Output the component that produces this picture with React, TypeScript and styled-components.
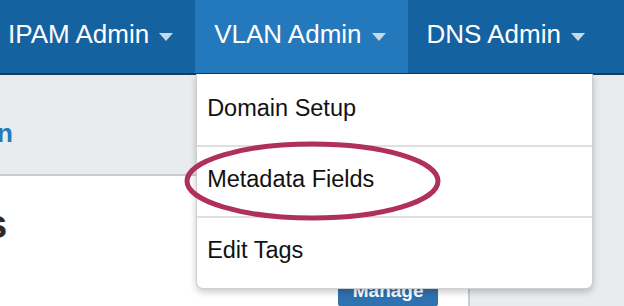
import React from 'react';
import styled, { createGlobalStyle } from 'styled-components';

const GlobalStyle = createGlobalStyle`
  html, body {
    margin: 0;
    padding: 0;
    background: #e8ecef;
    font-family: "Liberation Sans", Arial, Helvetica, sans-serif;
    overflow: hidden;
  }
  * {
    box-sizing: border-box;
  }
`;

const NavBar = styled.nav`
  height: 75px;
  background-color: #1562a0;
  border-bottom: 2px solid #0f3d68;
  position: relative;
  z-index: 5;
`;

const NavList = styled.ul`
  display: flex;
  margin: 0 0 0 -11px;
  padding: 0;
  list-style: none;
  height: 73px;
`;

const NavItem = styled.li<{ $active?: boolean }>`
  position: relative;
  display: flex;
  align-items: center;
  gap: 10px;
  height: 73px;
  padding: 0 22px 4px 19px;
  background-color: ${({ $active }) => ($active ? '#2479bd' : 'transparent')};
  color: #ffffff;
  font-size: 26px;
  white-space: nowrap;
  cursor: pointer;
`;

const Caret = styled.span`
  display: inline-block;
  width: 0;
  height: 0;
  margin-top: 5px;
  border-left: 7.5px solid transparent;
  border-right: 7.5px solid transparent;
  border-top: 8px solid #c9d7e6;
`;

const Dropdown = styled.ul`
  position: absolute;
  top: 74px;
  left: 1px;
  width: 397px;
  margin: 0;
  padding: 2px 0 1px;
  list-style: none;
  background-color: #ffffff;
  border: 1px solid #cfcfcf;
  border-top: none;
  border-radius: 0 0 7px 7px;
  box-shadow: 0 3px 7px rgba(0, 0, 0, 0.22);
  cursor: default;
`;

const DropdownItem = styled.li`
  height: 69px;
  line-height: 65px;
  padding: 0 10px;
  font-size: 23.5px;
  color: #111111;
`;

const Divider = styled.li`
  height: 2px;
  background-color: #e0e0e0;
`;

const Highlight = styled.svg`
  position: absolute;
  left: -13px;
  top: 66px;
  overflow: visible;
  pointer-events: none;
`;

const Main = styled.div`
  display: flex;
  height: calc(100vh - 75px);
`;

const Panel = styled.section`
  width: 470px;
  background-color: #ffffff;
  border-right: 2px solid #cccccc;
  display: flex;
  flex-direction: column;
`;

const PanelHeading = styled.div`
  height: 106px;
  padding-top: 43px;
  background-color: #e9ecef;
  border-bottom: 2px solid #cbcbcb;
`;

const HeadingLink = styled.a`
  display: block;
  margin-left: -3px;
  font-size: 26px;
  line-height: 30px;
  font-weight: bold;
  color: #2a7ab8;
  text-decoration: none;
`;

const PanelBody = styled.div`
  display: flex;
  flex-direction: column;
`;

const Title = styled.h2`
  margin: 26px 0 0 -15px;
  font-size: 40px;
  line-height: 44px;
  font-weight: bold;
  color: #2b2b2b;
`;

const ButtonRow = styled.div`
  display: flex;
  justify-content: flex-end;
  padding-right: 30px;
  margin-top: 30px;
`;

const ManageButton = styled.button`
  padding: 4px 14.5px;
  border: none;
  border-radius: 2px;
  background-color: #2f72b0;
  color: #ffffff;
  font-family: inherit;
  font-size: 19px;
  line-height: 22px;
  font-weight: bold;
`;

const App: React.FC = () => {
  return (
    <>
      <GlobalStyle />
      <NavBar>
        <NavList>
          <NavItem>
            IPAM Admin <Caret />
          </NavItem>
          <NavItem $active>
            VLAN Admin <Caret />
            <Dropdown>
              <DropdownItem>Domain Setup</DropdownItem>
              <Divider />
              <DropdownItem>Metadata Fields</DropdownItem>
              <Divider />
              <DropdownItem>Edit Tags</DropdownItem>
              <Highlight width="260" height="84" viewBox="0 0 260 84">
                <ellipse
                  cx="128.5"
                  cy="41"
                  rx="125.5"
                  ry="37"
                  fill="none"
                  stroke="#b0305c"
                  strokeWidth="5"
                />
              </Highlight>
            </Dropdown>
          </NavItem>
          <NavItem>
            DNS Admin <Caret />
          </NavItem>
        </NavList>
      </NavBar>

      <Main>
        <Panel>
          <PanelHeading>
            <HeadingLink href="#">n</HeadingLink>
          </PanelHeading>
          <PanelBody>
            <Title>s</Title>
            <ButtonRow>
              <ManageButton>Manage</ManageButton>
            </ButtonRow>
          </PanelBody>
        </Panel>
      </Main>
    </>
  );
};

export default App;
